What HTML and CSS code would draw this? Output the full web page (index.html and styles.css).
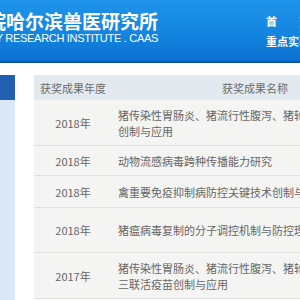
FILE: index.html
```html
<!DOCTYPE html>
<html lang="zh-CN">
<head>
<meta charset="utf-8">
<title>获奖成果</title>
<link rel="stylesheet" href="styles.css">
</head>
<body>
<header class="header">
  <div class="logo">
    <div class="logo-cn">中国农业科学院哈尔滨兽医研究所</div>
    <div class="logo-en">HARBIN VETERINARY RESEARCH INSTITUTE . CAAS</div>
  </div>
  <nav class="nav">
    <a class="nav-item">首　　页</a>
    <a class="nav-item">重点实验室</a>
  </nav>
</header>
<main class="main">
  <aside class="sidebar">
    <div class="side-title">成果</div>
    <div class="side-body"></div>
  </aside>
  <section class="awards">
    <div class="row head">
      <div class="cell year">获奖成果年度</div>
      <div class="cell name-head">获奖成果名称</div>
    </div>
    <div class="row double">
      <div class="cell year">2018年</div>
      <div class="cell name">猪传染性胃肠炎、猪流行性腹泻、猪轮状病毒三联活疫苗<br>创制与应用</div>
    </div>
    <div class="row single">
      <div class="cell year">2018年</div>
      <div class="cell name">动物流感病毒跨种传播能力研究</div>
    </div>
    <div class="row single wide">
      <div class="cell year">2018年</div>
      <div class="cell name">禽重要免疫抑制病防控关键技术创制与应用</div>
    </div>
    <div class="row tall">
      <div class="cell year">2018年</div>
      <div class="cell name">猪瘟病毒复制的分子调控机制与防控理论研究</div>
    </div>
    <div class="row double">
      <div class="cell year">2017年</div>
      <div class="cell name">猪传染性胃肠炎、猪流行性腹泻、猪轮状病毒（G5型）<br>三联活疫苗创制与应用</div>
    </div>
  </section>
</main>
</body>
</html>
```
FILE: styles.css
```css
html, body {
  margin: 0;
  padding: 0;
  background: #ffffff;
  overflow: hidden;
  font-family: "Noto Sans CJK SC", "Noto Sans", sans-serif;
}

.header {
  height: 61px;
  display: flex;
  background: linear-gradient(to bottom, #1f94ea 0%, #1485e0 55%, #0c70d2 100%);
  border-bottom: 2px solid #0a53a8;
  color: #ffffff;
}

.logo {
  width: 158px;
  flex-shrink: 0;
  display: flex;
  flex-direction: column;
  align-items: flex-end;
  padding-top: 9px;
}

.logo-cn {
  white-space: nowrap;
  font-size: 19px;
  line-height: 24px;
  font-weight: 700;
}

.logo-en {
  white-space: nowrap;
  font-family: "Liberation Sans", Arial, sans-serif;
  font-size: 11px;
  line-height: 12px;
  letter-spacing: -0.3px;
  margin-top: -1px;
}

.nav {
  margin-left: 108px;
  display: flex;
  flex-direction: column;
  padding-top: 14px;
  gap: 6px;
}

.nav-item {
  white-space: nowrap;
  font-size: 11px;
  line-height: 14px;
  font-weight: 700;
  color: #ffffff;
}

.main {
  display: flex;
  padding-top: 12px;
}

.sidebar {
  width: 15px;
  flex-shrink: 0;
  margin-right: 19px;
  display: flex;
  flex-direction: column;
  height: 240px;
}

.side-title {
  height: 25px;
  background: #2160b0;
  color: transparent;
  overflow: hidden;
  font-size: 11px;
}

.side-body {
  flex: 1;
  background: #dbe8f7;
}

.awards {
  flex-shrink: 0;
  width: 364px;
  display: flex;
  flex-direction: column;
  font-size: 11px;
  line-height: 16px;
  color: #666666;
}

.row {
  display: grid;
  grid-template-columns: 78px 286px;
  align-items: center;
  box-sizing: border-box;
  background: #f4f4f2;
  border-bottom: 1px solid #e0e0de;
}

.row.head {
  height: 25px;
  background: #e2eaf0;
  border-bottom: none;
  color: #6a6a6a;
}

.row.double { height: 46px; }
.row.single { height: 30px; }
.row.single.wide { height: 32px; }
.row.tall { height: 45px; }

.cell {
  white-space: nowrap;
  overflow: hidden;
}

.cell.year {
  text-align: center;
}

.cell.name-head {
  text-align: center;
}

.cell.name {
  padding: 0 6px;
}
```
